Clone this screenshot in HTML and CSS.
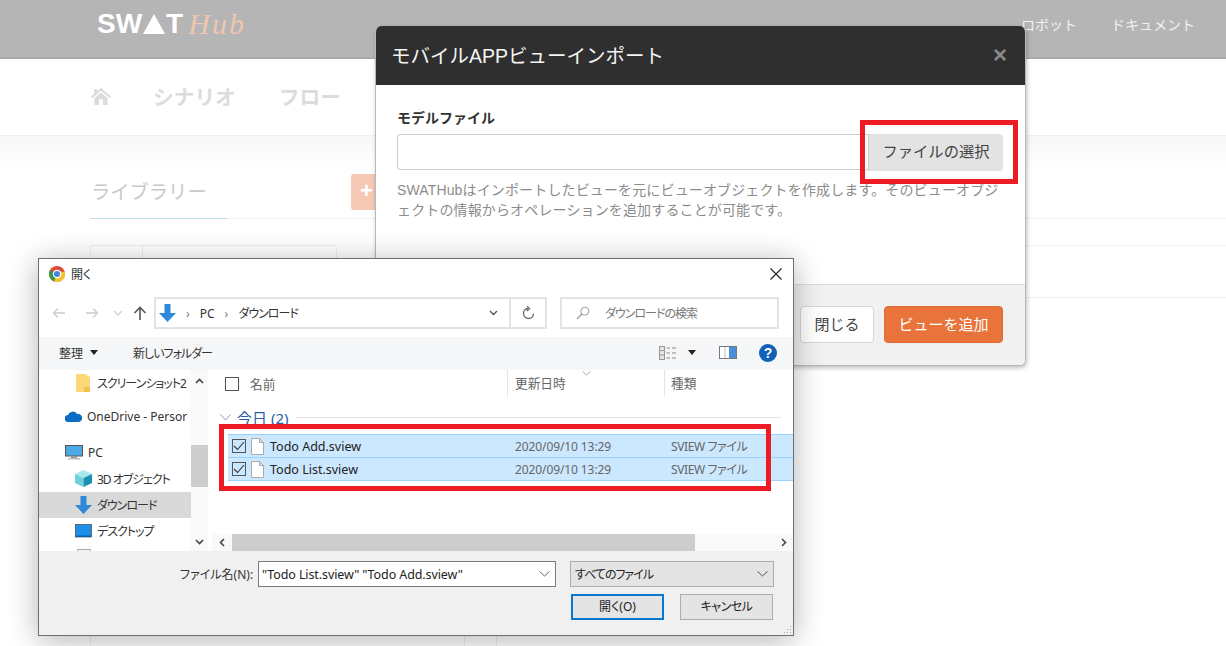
FILE: index.html
```html
<!DOCTYPE html>
<html lang="ja">
<head>
    <meta charset="UTF-8">
    <title>モバイルAPPビューインポート</title>
    <link rel="stylesheet" href="styles.css">
</head>
<body>
<div class="page">
    <header class="topbar">
        <div class="logo">
            <span class="logo-swat">SW</span>
            <svg class="logo-tri" width="22" height="20" viewBox="0 0 22 20"><polygon points="11,0 22,20 0,20" fill="#fff"/></svg>
            <span class="logo-swat">T</span>
            <span class="logo-hub">Hub</span>
        </div>
        <nav class="topnav">
            <span>ロボット</span>
            <span>ドキュメント</span>
        </nav>
    </header>
    <div class="tabs">
        <svg width="20" height="18" viewBox="0 0 20 18"><path d="M10 1 L20 9.5 L18.6 11 L10 3.8 L1.4 11 L0 9.5 L3 7 V2 H6 V4.4Z M3.4 11 L10 5.5 L16.6 11 V18 H12 V12.5 H8 V18 H3.4Z" fill="#dcdcdc"/></svg>
        <span class="tab">シナリオ</span>
        <span class="tab">フロー</span>
    </div>
    <div class="fade"></div>
    <div class="lib-row">
        <div class="lib-title">ライブラリー</div>
        <div class="lib-add">+</div>
    </div>
    <div class="table-row first"></div>
    <div class="table-row second"><div class="search-stub"><i></i></div></div>
    <div class="table-rest"><i></i><i></i></div>
</div>

<div class="modal">
    <div class="modal-head">
        <h1>モバイルAPPビューインポート</h1>
        <span class="modal-x">×</span>
    </div>
    <div class="modal-body">
        <label class="field-label">モデルファイル</label>
        <div class="file-group">
            <div class="file-input"></div>
            <div class="file-btn">ファイルの選択</div>
        </div>
        <p class="help">SWATHubはインポートしたビューを元にビューオブジェクトを作成します。そのビューオブジェクトの情報からオペレーションを追加することが可能です。</p>
    </div>
    <div class="modal-foot">
        <span class="btn">閉じる</span>
        <span class="btn primary">ビューを追加</span>
    </div>
</div>

<div class="dialog">
    <div class="d-title">
        <svg width="16" height="16" viewBox="0 0 16 16">
            <circle cx="8" cy="8" r="8" fill="#dd4b39"/>
            <path d="M8 8 L1 4.2 A8 8 0 0 0 5 15.4Z" fill="#3a9a4a"/>
            <path d="M8 8 L5 15.4 A8 8 0 0 0 15.8 6 L8 5Z" fill="#f4c430"/>
            <circle cx="8" cy="8" r="3.6" fill="#3f82e0" stroke="#fff" stroke-width="1.2"/>
        </svg>
        <span>開く</span>
        <svg class="d-close" width="12" height="12" viewBox="0 0 12 12"><path d="M.5 .5 L11.5 11.5 M11.5 .5 L.5 11.5" stroke="#222" stroke-width="1.1"/></svg>
    </div>

    <div class="d-address">
        <div class="d-arrows">
            <svg width="14" height="12" viewBox="0 0 14 12"><path d="M13 6 H1.5 M6 1.5 L1.5 6 L6 10.5" fill="none" stroke="#ccc" stroke-width="1.3"/></svg>
            <svg width="14" height="12" viewBox="0 0 14 12"><path d="M1 6 H12.5 M8 1.5 L12.5 6 L8 10.5" fill="none" stroke="#ccc" stroke-width="1.3"/></svg>
            <svg width="10" height="6" viewBox="0 0 10 6"><path d="M1 1 L5 5 L9 1" fill="none" stroke="#ccc" stroke-width="1.2"/></svg>
            <svg width="14" height="14" viewBox="0 0 14 14"><path d="M7 14 V1.5 M1.5 7 L7 1.5 L12.5 7" fill="none" stroke="#555" stroke-width="1.6"/></svg>
        </div>
        <div class="d-path">
            <svg width="17" height="18" viewBox="0 0 17 18"><path d="M5.5 0 H11.5 V9 H17 L8.5 18 L0 9 H5.5Z" fill="#2f88d8"/></svg>
            <span class="crumb-sep">›</span><span>PC</span><span class="crumb-sep">›</span><span class="tight">ダウンロード</span>
            <svg class="path-chev" width="9" height="6" viewBox="0 0 9 6"><path d="M1 1 L4.5 4.5 L8 1" fill="none" stroke="#555" stroke-width="1.4"/></svg>
        </div>
        <div class="d-refresh">
            <svg width="13" height="14" viewBox="0 0 13 14"><path d="M6 2.5 A5 5 0 1 0 11.5 7.5 M5 .3 L7.6 2.6 L5 5" fill="none" stroke="#666" stroke-width="1.3"/></svg>
        </div>
        <div class="d-search">
            <svg width="14" height="14" viewBox="0 0 14 14"><circle cx="8.8" cy="5.2" r="4" fill="none" stroke="#999"/><path d="M5.8 8 L1 13" stroke="#999" stroke-width="1.2"/></svg>
            <span class="tight">ダウンロードの検索</span>
        </div>
    </div>

    <div class="d-toolbar">
        <span>整理</span><i class="caret"></i>
        <span class="new-folder tight">新しいフォルダー</span>
        <div class="d-tools">
            <svg width="18" height="14" viewBox="0 0 18 14"><rect x=".5" y=".5" width="5" height="13" fill="#e4e4e4" stroke="#999"/><path d="M1 4.5 H5 M1 9 H5" stroke="#999"/><path d="M7.5 2 H11 M13 2 H17 M7.5 7 H11 M13 7 H17 M7.5 12 H11 M13 12 H17" stroke="#888"/></svg>
            <i class="caret tool-caret"></i>
            <svg class="pane" width="18" height="13" viewBox="0 0 18 13"><rect x=".5" y=".5" width="17" height="12" fill="#fff" stroke="#777"/><rect x="10" y="1" width="7" height="11" fill="#4a90d9"/><path d="M6 1 V12" stroke="#bbb"/></svg>
            <svg width="18" height="18" viewBox="0 0 18 18"><circle cx="9" cy="9" r="9" fill="#0f62b5"/><text x="9" y="14" text-anchor="middle" class="help-q">?</text></svg>
        </div>
    </div>

    <div class="d-main">
        <div class="d-nav">
            <div class="nav-item lvl2">
                <svg class="folder" width="14" height="18" viewBox="0 0 14 18"><path d="M0 0 H9 L14 3 V18 H0Z" fill="#fbd878"/><rect x="8" y="13" width="6" height="5" fill="#f2c24f"/></svg>
                <span class="tight">スクリーンショット2</span>
            </div>
            <div class="nav-item lvl1 gap-top">
                <svg width="17" height="11" viewBox="0 0 17 11"><path d="M3.5 11 A3.5 3.5 0 0 1 3 4 A5 5 0 0 1 12 3 A4 4 0 0 1 14 11Z" fill="#0a6cc4"/></svg>
                <span>OneDrive - Persor</span>
            </div>
            <div class="nav-item lvl1 gap-pc">
                <svg width="18" height="15" viewBox="0 0 18 15"><rect x=".5" y=".5" width="17" height="10.5" fill="#4fa8e6" stroke="#555"/><rect x="6" y="11" width="6" height="2" fill="#999"/><rect x="3" y="13" width="12" height="1.5" fill="#bbb"/></svg>
                <span>PC</span>
            </div>
            <div class="nav-item lvl2">
                <svg width="17" height="17" viewBox="0 0 17 17"><path d="M8.5 0 L17 4 L8.5 8 L0 4Z" fill="#a8e6ee"/><path d="M0 4 L8.5 8 V17 L0 13Z" fill="#6fd0dd"/><path d="M17 4 L8.5 8 V17 L17 13Z" fill="#1c8fb5"/></svg>
                <span class="tight">3D オブジェクト</span>
            </div>
            <div class="nav-item lvl2 active">
                <svg width="17" height="18" viewBox="0 0 17 18"><path d="M5.5 0 H11.5 V9 H17 L8.5 18 L0 9 H5.5Z" fill="#2f88d8"/></svg>
                <span class="tight">ダウンロード</span>
            </div>
            <div class="nav-item lvl2">
                <svg width="17" height="14" viewBox="0 0 17 14"><rect x=".5" y=".5" width="16" height="12.5" fill="#1d8fe6" stroke="#333" stroke-width=".6"/><rect x="1" y="11.5" width="15" height="1.5" fill="#0c5fa8"/></svg>
                <span class="tight">デスクトップ</span>
            </div>
            <div class="nav-item lvl2">
                <svg width="17" height="16" viewBox="0 0 17 16"><rect x="2.5" y=".5" width="13" height="15" fill="#f4f4f4" stroke="#aaa"/></svg>
                <span class="tight">ドキュメント</span>
            </div>
        </div>
        <div class="v-scroll">
            <svg class="v-arrow" width="9" height="6" viewBox="0 0 9 6"><path d="M1 5 L4.5 1.5 L8 5" fill="none" stroke="#444" stroke-width="1.6"/></svg>
            <div class="v-thumb"></div>
            <svg class="v-arrow bottom" width="9" height="6" viewBox="0 0 9 6"><path d="M1 1 L4.5 4.5 L8 1" fill="none" stroke="#444" stroke-width="1.6"/></svg>
        </div>
        <div class="d-list">
            <div class="list-head">
                <div class="col-name"><i class="check"></i><span>名前</span></div>
                <div class="col-date"><span>更新日時</span><svg class="sort" width="9" height="5" viewBox="0 0 9 5"><path d="M.5 .5 L4.5 4 L8.5 .5" fill="none" stroke="#aaa"/></svg></div>
                <div class="col-type"><span>種類</span></div>
            </div>
            <div class="group">
                <svg width="11" height="7" viewBox="0 0 11 7"><path d="M.5 .5 L5.5 6 L10.5 .5" fill="none" stroke="#8a9bb0"/></svg>
                <span>今日 (2)</span>
                <i class="group-line"></i>
            </div>
            <div class="file-row">
                <div class="col-file">
                    <i class="check on"><svg width="12" height="10" viewBox="0 0 12 10"><path d="M1 5 L4.5 8.5 L11 1" fill="none" stroke="#333" stroke-width="1.1"/></svg></i>
                    <svg class="doc" width="13" height="17" viewBox="0 0 13 17"><path d="M.5 .5 H8.5 L12.5 4.5 V16.5 H.5Z M8.5 .5 V4.5 H12.5" fill="#fff" stroke="#aaa"/></svg>
                    <span>Todo Add.sview</span>
                </div>
                <div class="col-when">2020/09/10 13:29</div>
                <div class="col-kind">SVIEW ファイル</div>
            </div>
            <div class="file-row">
                <div class="col-file">
                    <i class="check on"><svg width="12" height="10" viewBox="0 0 12 10"><path d="M1 5 L4.5 8.5 L11 1" fill="none" stroke="#333" stroke-width="1.1"/></svg></i>
                    <svg class="doc" width="13" height="17" viewBox="0 0 13 17"><path d="M.5 .5 H8.5 L12.5 4.5 V16.5 H.5Z M8.5 .5 V4.5 H12.5" fill="#fff" stroke="#aaa"/></svg>
                    <span>Todo List.sview</span>
                </div>
                <div class="col-when">2020/09/10 13:29</div>
                <div class="col-kind">SVIEW ファイル</div>
            </div>
            <div class="h-scroll">
                <svg width="6" height="9" viewBox="0 0 6 9"><path d="M5 1 L1.5 4.5 L5 8" fill="none" stroke="#444" stroke-width="1.6"/></svg>
                <div class="h-thumb"></div>
                <svg class="h-right" width="6" height="9" viewBox="0 0 6 9"><path d="M1 1 L4.5 4.5 L1 8" fill="none" stroke="#444" stroke-width="1.6"/></svg>
            </div>
        </div>
    </div>

    <div class="d-bottom">
        <div class="name-row">
            <span class="name-label">ファイル名(N):</span>
            <div class="name-input">
                <span>"Todo List.sview" "Todo Add.sview"</span>
                <svg width="11" height="6" viewBox="0 0 11 6"><path d="M.5 .5 L5.5 5 L10.5 .5" fill="none" stroke="#666"/></svg>
            </div>
            <div class="type-select">
                <span class="tight">すべてのファイル</span>
                <svg width="11" height="6" viewBox="0 0 11 6"><path d="M.5 .5 L5.5 5 L10.5 .5" fill="none" stroke="#555"/></svg>
            </div>
        </div>
        <div class="btn-row">
            <span class="win-btn default">開く(O)</span>
            <span class="win-btn cancel">キャンセル</span>
        </div>
        <svg class="grip" width="8" height="8" viewBox="0 0 8 8"><path d="M6 0h1v1H6z M6 3h1v1H6z M3 3h1v1H3z M6 6h1v1H6z M3 6h1v1H3z M0 6h1v1H0z" fill="#aaa"/></svg>
    </div>
</div>

<div class="mark mark-btn"></div>
<div class="mark mark-files"></div>
</body>
</html>
```

FILE: styles.css
```css
* {
    box-sizing: border-box;
}

html, body {
    margin: 0;
    height: 100%;
    overflow: hidden;
    background: #fff;
}

body {
    position: relative;
    font-family: "Liberation Sans", "Noto Sans CJK JP", sans-serif;
}

svg {
    flex: none;
}

/* page behind the dialogs */
.topbar {
    height: 59px;
    background: #b5b5b5;
    border-bottom: 2px solid #aaa;
    display: flex;
    align-items: center;
    justify-content: space-between;
    padding: 0 31px 9px 97px;
}

.logo {
    display: flex;
    align-items: center;
    height: 24px;
}

.logo-swat {
    font: bold 28px "Liberation Sans", sans-serif;
    color: #fff;
}

.logo-tri {
    margin: 0 1px;
}

.logo-hub {
    font: italic 30px "Liberation Serif", serif;
    letter-spacing: 2px;
    color: #efc6b0;
    margin-left: 5px;
}

.topnav {
    display: flex;
    gap: 34px;
    font-size: 14px;
    color: #f2f2f2;
}

.tabs {
    height: 77px;
    display: flex;
    align-items: center;
    padding: 0 0 2px 91px;
    border-bottom: 1px solid #f0f0f0;
}

.tab {
    font-size: 20.7px;
    font-weight: bold;
    color: #dcdcdc;
    margin-right: 43px;
}

.tabs svg {
    margin-right: 42px;
}

.fade {
    height: 34px;
    background: linear-gradient(#f7f7f7, #fff);
}

.lib-row {
    height: 49px;
    margin-left: 90px;
    border-bottom: 1px solid #f1f1f1;
    display: flex;
    align-items: flex-start;
    position: relative;
}

.lib-title {
    width: 137px;
    height: 49px;
    padding-left: 1px;
    padding-top: 9px;
    font-size: 19.3px;
    line-height: 27px;
    color: #c9c9c9;
    border-bottom: 1px solid #bcdcf0;
}

.lib-add {
    margin: 4px 0 0 124px;
    width: 40px;
    height: 36px;
    background: #f5c9b5;
    border-radius: 3px;
    color: #fff;
    font-size: 22px;
    font-weight: bold;
    line-height: 34px;
    padding-left: 9px;
}

.table-row.first {
    height: 27px;
    margin-left: 1000px;
    border-bottom: 1px solid #f1f1f1;
}

.table-row.second {
    height: 53px;
    margin-left: 90px;
    border-bottom: 1px solid #f1f1f1;
}

.search-stub {
    width: 247px;
    height: 27px;
    margin-top: -1px;
    border: 1px solid #eee;
    border-radius: 3px;
}

.search-stub i {
    display: block;
    width: 52px;
    height: 26px;
    border-right: 1px solid #eee;
}

.table-rest {
    height: 350px;
    margin-left: 90px;
    display: flex;
    border-left: 1px solid #eee;
}

.table-rest i {
    display: block;
    width: 374px;
    border-right: 1px solid #eee;
}

.table-rest i + i {
    width: 32px;
}

/* bootstrap style modal */
.modal {
    position: absolute;
    left: 375px;
    top: 26px;
    width: 651px;
    height: 340px;
    background: #fff;
    border: 1px solid #b9b9b9;
    border-top: 0;
    border-radius: 6px;
    box-shadow: 1px 2px 4px rgba(0, 0, 0, .25);
    display: flex;
    flex-direction: column;
    overflow: hidden;
}

.modal-head {
    height: 59px;
    flex: none;
    background: #2f2f2f;
    display: flex;
    align-items: center;
    justify-content: space-between;
    padding: 0 18px 2px 15px;
    color: #f4f4f4;
}

.modal-head h1 {
    margin: 0;
    font-size: 19.5px;
    font-weight: normal;
}

.modal-x {
    font-size: 24px;
    font-weight: bold;
    color: #8a8a8a;
}

.modal-body {
    flex: 1;
    padding: 23px 22px 0 21px;
}

.field-label {
    display: block;
    height: 20px;
    margin-bottom: 6px;
    font-size: 14px;
    line-height: 20px;
    font-weight: bold;
    color: #333;
}

.file-group {
    display: flex;
    height: 37px;
}

.file-input {
    flex: 1;
    height: 36px;
    border: 1px solid #ccc;
    border-right: 0;
    border-radius: 4px 0 0 4px;
}

.file-btn {
    width: 135px;
    background: #e3e3e3;
    border-left: 1px solid #ccc;
    border-radius: 0 4px 4px 0;
    color: #444;
    font-size: 15.3px;
    text-align: center;
    line-height: 36px;
}

.help {
    margin: 9px 0 0;
    font-size: 14px;
    letter-spacing: .14px;
    line-height: 20px;
    color: #8c8c8c;
}

.modal-foot {
    height: 81px;
    flex: none;
    background: #f1f1f1;
    border-top: 1px solid #ddd;
    display: flex;
    justify-content: flex-end;
    gap: 10px;
    padding: 21px 22px 0 0;
}

.btn {
    width: 74px;
    height: 37px;
    border: 1px solid #d5d5d5;
    border-radius: 4px;
    background: #fff;
    color: #444;
    font-size: 15px;
    text-align: center;
    line-height: 35px;
}

.btn.primary {
    width: 119px;
    background: #e8743b;
    border-color: #e06c33;
    color: #fff;
}

/* windows file dialog */
.dialog {
    position: absolute;
    left: 38px;
    top: 258px;
    width: 756px;
    height: 378px;
    background: #fff;
    border: 1px solid #6f6f6f;
    box-shadow: 0 4px 28px rgba(0, 0, 0, .3);
    font-family: "Noto Sans", "Noto Sans CJK JP", sans-serif;
    font-size: 12px;
    font-feature-settings: "palt";
    color: #333;
    display: flex;
    flex-direction: column;
}

/* kana in the real dialog runs narrower than Noto even with palt */
.tight {
    letter-spacing: -1px;
}

.d-title {
    height: 32px;
    flex: none;
    display: flex;
    align-items: center;
    gap: 6px;
    padding: 0 11px 2px 10px;
}

.d-close {
    margin-left: auto;
}

.d-address {
    height: 32px;
    margin-top: 6px;
    flex: none;
    display: flex;
    align-items: center;
}

.d-arrows {
    width: 115px;
    display: flex;
    align-items: center;
    padding-left: 13px;
}

.d-arrows svg:nth-child(2) {
    margin-left: 19px;
}

.d-arrows svg:nth-child(3) {
    margin-left: 14px;
}

.d-arrows svg:nth-child(4) {
    margin-left: 10px;
}

.d-path {
    width: 357px;
    height: 32px;
    border: 2px solid #e3e3e3;
    display: flex;
    align-items: center;
    padding-left: 3px;
}

.crumb-sep {
    margin: 0 10px;
    color: #777;
}

.path-chev {
    margin-left: auto;
    margin-right: 11px;
}

.d-refresh {
    width: 36px;
    height: 32px;
    border: 2px solid #e3e3e3;
    border-left: 0;
    display: flex;
    align-items: center;
    justify-content: center;
}

.d-search {
    width: 219px;
    height: 32px;
    margin-left: 13px;
    border: 2px solid #e3e3e3;
    display: flex;
    align-items: center;
    gap: 15px;
    padding-left: 14px;
    color: #777;
}

.d-toolbar {
    height: 33px;
    margin-top: 8px;
    flex: none;
    background: #f5f6f7;
    display: flex;
    align-items: center;
    padding: 0 16px 2px 20px;
}

.caret {
    width: 0;
    height: 0;
    margin-left: 7px;
    border: 4px solid transparent;
    border-top: 5px solid #222;
    border-bottom: 0;
}

.new-folder {
    margin-left: 35px;
}

.d-tools {
    margin-left: auto;
    display: flex;
    align-items: center;
}

.tool-caret {
    margin-left: 11px;
}

.pane {
    margin: 0 22px 0 23px;
}

.help-q {
    font: bold 14px "Liberation Sans", sans-serif;
    fill: #fff;
}

.d-main {
    height: 181px;
    flex: none;
    display: flex;
    overflow: hidden;
}

.d-nav {
    width: 152px;
    flex: none;
    overflow: hidden;
}

.nav-item {
    height: 26px;
    display: flex;
    align-items: center;
    padding-bottom: 1px;
    white-space: nowrap;
    overflow: hidden;
}

.nav-item.lvl1 {
    padding-left: 26px;
    gap: 5px;
}

.nav-item.lvl2 {
    padding-left: 36px;
    gap: 5px;
}

.folder {
    margin: 0 2px 0 1px;
}

.nav-item.gap-top {
    margin-top: 8px;
}

.nav-item.gap-pc {
    margin-top: 10px;
}

.nav-item.active {
    background: #d9d9d9;
}

.v-scroll {
    width: 17px;
    flex: none;
    background: #f9f9f9;
    display: flex;
    flex-direction: column;
    align-items: center;
}

.v-arrow {
    margin-top: 8px;
}

.v-arrow.bottom {
    margin-top: auto;
    margin-bottom: 6px;
}

.v-thumb {
    width: 17px;
    height: 42px;
    margin-top: 61px;
    background: #cdcdcd;
}

.d-list {
    flex: 1;
    margin-left: 4px;
    display: flex;
    flex-direction: column;
    min-width: 0;
}

.list-head {
    height: 36px;
    flex: none;
    display: flex;
    font-size: 12.7px;
    color: #666;
}

.col-name {
    width: 295px;
    display: flex;
    align-items: center;
    padding-left: 13px;
    gap: 11px;
    height: 27px;
}

.col-date {
    position: relative;
    width: 157px;
    height: 27px;
    border-left: 1px solid #e5e5e5;
    padding-left: 7px;
    line-height: 27px;
}

.sort {
    position: absolute;
    left: 74px;
    top: 1px;
}

.col-type {
    height: 27px;
    border-left: 1px solid #e5e5e5;
    padding-left: 6px;
    line-height: 27px;
}

.check {
    width: 14px;
    height: 14px;
    flex: none;
    border: 1px solid #555;
    background: #fff;
    display: block;
}

.check.on {
    background: transparent;
    display: flex;
    align-items: center;
    justify-content: center;
}

.group {
    height: 24px;
    flex: none;
    display: flex;
    align-items: center;
    padding: 0 0 2px 8px;
    gap: 6px;
    font-size: 15px;
    color: #2a5fa8;
}

.group-line {
    width: 485px;
    height: 1px;
    margin-left: 2px;
    background: #e3e3e3;
}

.file-row {
    height: 24px;
    margin-left: 16px;
    margin-top: -1px;
    flex: none;
    display: flex;
    align-items: center;
    background: #cce8ff;
    border: 1px solid #99d1ff;
    border-width: 1px 0;
    color: #666;
}

.group + .file-row {
    margin-top: 4px;
}

.col-file {
    width: 287px;
    display: flex;
    align-items: center;
    padding-left: 4px;
    font-size: 12.5px;
    color: #222;
}

.doc {
    margin: 0 6px 0 5px;
}

.col-when {
    width: 156px;
    letter-spacing: -.1px;
}

.col-kind {
    letter-spacing: -.4px;
}

.h-scroll {
    height: 17px;
    margin-top: auto;
    flex: none;
    display: flex;
    align-items: center;
    padding-left: 7px;
    background: #f9f9f9;
}

.h-thumb {
    width: 463px;
    height: 17px;
    margin-left: 7px;
    background: #cdcdcd;
}

.h-right {
    margin-left: auto;
    margin-right: 6px;
}

.d-bottom {
    flex: 1;
    background: #f0f0f0;
    padding-top: 10px;
    position: relative;
}

.name-row {
    display: flex;
    align-items: center;
    padding-left: 141px;
}

.name-label {
    width: 72px;
    margin-right: 6px;
    text-align: right;
    white-space: nowrap;
}

.name-input {
    width: 298px;
    height: 26px;
    background: #fff;
    border: 1px solid #7a7a7a;
    display: flex;
    align-items: center;
    justify-content: space-between;
    padding: 0 5px 0 3px;
    font-size: 12.5px;
    letter-spacing: -.1px;
    color: #222;
}

.type-select {
    width: 204px;
    height: 26px;
    margin-left: 14px;
    background: #e4e4e4;
    border: 1px solid #adadad;
    display: flex;
    align-items: center;
    justify-content: space-between;
    padding: 0 5px 0 4px;
    color: #222;
}

.btn-row {
    display: flex;
    gap: 16px;
    margin: 7px 0 0 532px;
}

.win-btn {
    width: 93px;
    height: 26px;
    background: #e4e4e4;
    border: 1px solid #adadad;
    text-align: center;
    line-height: 24px;
    color: #222;
}

.win-btn.cancel {
    letter-spacing: -.5px;
}

.win-btn.default {
    border: 2px solid #0b78d0;
    line-height: 22px;
}

.grip {
    position: absolute;
    right: 1px;
    bottom: 1px;
}

/* red annotations drawn over the shot */
.mark {
    position: absolute;
    border: 5px solid #ed1c24;
}

.mark-btn {
    left: 860px;
    top: 120px;
    width: 158px;
    height: 64px;
}

.mark-files {
    left: 219px;
    top: 424px;
    width: 552px;
    height: 67px;
}
```
